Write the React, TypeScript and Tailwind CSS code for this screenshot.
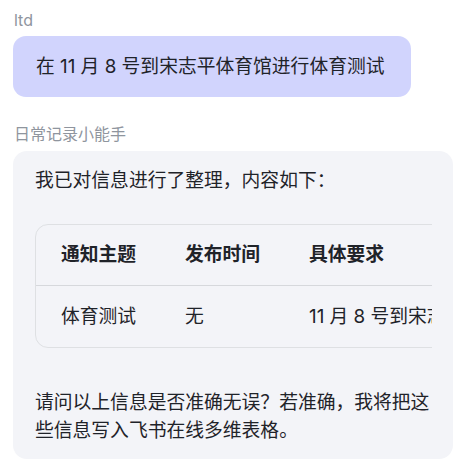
const font = '"Inter", "Noto Sans CJK SC", sans-serif';

const columns = ['通知主题', '发布时间', '具体要求'];
const rows = [['体育测试', '无', '11 月 8 号到宋志平体育馆进行体育测试']];

function SenderLabel({ name }: { name: string }) {
  return <div className="px-[14px] text-[16px] leading-[24px] text-[#8f959e]">{name}</div>;
}

export default function App() {
  return (
    <div className="min-h-screen bg-white pt-[8px] text-[#1f2329]" style={{ fontFamily: font }}>
      <SenderLabel name="ltd" />
      <div className="mt-[4px] pl-[13px] pr-[7px]">
        <div className="w-fit rounded-[13px] bg-[#d1d4fd] pl-[23px] pr-[26px] py-[17px] text-[18.8px] leading-[27px]">
          在 11 月 8 号到宋志平体育馆进行体育测试
        </div>
      </div>

      <div className="mt-[25px]">
        <SenderLabel name="日常记录小能手" />
      </div>
      <div className="mt-[5px] pl-[13px] pr-[7px]">
        <div className="rounded-[14px] bg-[#f3f4f8] pb-[14px] pl-[22px] pr-[21px] pt-[16px] text-[18.8px] leading-[28px]">
          <p>我已对信息进行了整理，内容如下：</p>

          <div className="mt-[29px] overflow-hidden">
            <div className="w-[600px] rounded-[13px] border border-[#dee0e3]">
              <div className="grid h-[61px] grid-cols-[124px_124px_1fr] items-center border-b border-[#d6d8dc] font-semibold">
                {columns.map((c) => (
                  <div key={c} className="pl-[25px]">{c}</div>
                ))}
              </div>
              {rows.map((r) => (
                <div key={r[0]} className="grid h-[61px] grid-cols-[124px_124px_1fr] items-center whitespace-nowrap">
                  {r.map((cell) => (
                    <div key={cell} className="pl-[25px]">{cell}</div>
                  ))}
                </div>
              ))}
            </div>
          </div>

          <p className="mt-[41px]">
            请问以上信息是否准确无误？若准确，我将把这些信息写入飞书在线多维表格。
          </p>
        </div>
      </div>
    </div>
  );
}
